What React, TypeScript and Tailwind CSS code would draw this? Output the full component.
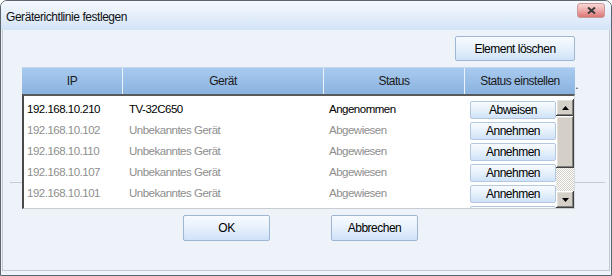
import React from 'react';

type Row = { ip: string; device: string; status: string; action: string; active?: boolean };

const rows: Row[] = [
  { ip: '192.168.10.210', device: 'TV-32C650', status: 'Angenommen', action: 'Abweisen', active: true },
  { ip: '192.168.10.102', device: 'Unbekanntes Gerät', status: 'Abgewiesen', action: 'Annehmen' },
  { ip: '192.168.10.110', device: 'Unbekanntes Gerät', status: 'Abgewiesen', action: 'Annehmen' },
  { ip: '192.168.10.107', device: 'Unbekanntes Gerät', status: 'Abgewiesen', action: 'Annehmen' },
  { ip: '192.168.10.101', device: 'Unbekanntes Gerät', status: 'Abgewiesen', action: 'Annehmen' },
];

const btn =
  'flex items-center justify-center text-black border border-[#9fb6d2] rounded-[2px] bg-linear-to-b from-[#f8fbff] via-[#e6f0fb] to-[#cfe2f8]';

const classic =
  'bg-[#d4d0c8] shadow-[inset_-1px_-1px_#404040,inset_1px_1px_#ffffff,inset_-2px_-2px_#808080,inset_2px_2px_#e4e1dc]';

function Arrow({ up }: { up?: boolean }) {
  return (
    <svg width="7" height="4" viewBox="0 0 7 4">
      <polygon points={up ? '3.5,0 7,4 0,4' : '0,0 7,0 3.5,4'} fill="#000" />
    </svg>
  );
}

export default function App() {
  return (
    <div className="w-[612px] h-[276px] flex flex-col border border-[#5d666f] rounded-t-[7px] bg-[#eef3fa] overflow-hidden text-[11.5px] tracking-[-0.5px] leading-none font-['Liberation_Sans',Arial,sans-serif]">
      {/* title bar */}
      <div className="h-[29px] flex justify-between bg-linear-to-b from-[#f6f9fe] to-[#d3e4f7]">
        <span className="pl-[5px] pt-[10px] text-[12px] tracking-[-0.45px] text-[#111]">Geräterichtlinie festlegen</span>
        <div className="mt-[2px] mr-[6px] w-[28px] h-[15px] flex items-center justify-center rounded-[3px] border border-[#c99a9a] bg-linear-to-b from-[#f7d6d6] via-[#eeaaaa] to-[#dc7575]">
          <svg width="9" height="7" viewBox="0 0 9 7">
            <path d="M1 0.5 L8 6.5 M8 0.5 L1 6.5" stroke="#3a3a3a" strokeWidth="2" />
          </svg>
        </div>
      </div>

      {/* body */}
      <div className="relative flex-1 mx-[1px] mb-[4px] border-x border-b border-[#c2c9d2] pt-[6px] pl-[19px] pr-[34px] flex flex-col">
        <div className="absolute left-[7px] right-[4px] top-[152px] h-px bg-[#c6ccd4]" />

        <div className="flex justify-end">
          <button className={`${btn} w-[120px] h-[25px] text-[12px]`}>Element löschen</button>
        </div>

        {/* header */}
        <div className="relative mt-[6px] h-[27px] flex text-[12px] text-[#1a1a1a] bg-linear-to-b from-[#a9caee] to-[#8ab3e0] border-t border-[#c3d9f1]">
          <div className="w-[101px] flex items-center justify-center border-r border-[#eaf2fb]">IP</div>
          <div className="w-[201px] flex items-center justify-center border-r border-[#eaf2fb]">Gerät</div>
          <div className="w-[141px] flex items-center justify-center border-r border-[#eaf2fb]">Status</div>
          <div className="flex-1 flex items-center justify-center">Status einstellen</div>
          <span className="absolute right-[-3px] top-[11px] text-[#333]">.</span>
        </div>

        {/* list */}
        <div className="relative z-10 h-[115px] bg-white border-t-2 border-l-2 border-t-[#5a5a5a] border-l-[#4a4a4a] border-r border-b border-r-[#d6dade] border-b-[#c9cdd2] pt-[3px] flex">
          <div className="w-[532px] overflow-hidden">
            {rows.map((r) => (
              <div key={r.ip} className={`h-[21px] flex items-center ${r.active ? 'text-black' : 'text-[#8e8e8e]'}`}>
                <div className="w-[99px] pl-[3px]">{r.ip}</div>
                <div className="w-[200px] pl-[6px]">{r.device}</div>
                <div className="w-[141px] pl-[6px]">{r.status}</div>
                <div className="pl-[6px]">
                  <button className={`${btn} w-[86px] h-[18px] border-[#b4c8df] text-[12px]`}>{r.action}</button>
                </div>
              </div>
            ))}
            <div className="h-[21px] flex items-start pt-[2px] pl-[446px]">
              <div className={`${btn} w-[86px] h-[18px] border-[#b4c8df]`} />
            </div>
          </div>
          {/* scrollbar */}
          <div className="w-[18px] flex flex-col bg-[repeating-conic-gradient(#d4d0c8_0_25%,#ffffff_0_50%)] bg-size-[2px_2px]">
            <div className={`${classic} h-[17px] flex items-center justify-center`}>
              <Arrow up />
            </div>
            <div className={`${classic} h-[52px]`} />
            <div className="flex-1" />
            <div className={`${classic} h-[17px] flex items-center justify-center`}>
              <Arrow />
            </div>
          </div>
        </div>

        {/* footer buttons */}
        <div className="mt-[6px] flex text-[12px]">
          <button className={`${btn} ml-[161px] w-[87px] h-[26px]`}>OK</button>
          <button className={`${btn} ml-[61px] w-[87px] h-[26px]`}>Abbrechen</button>
        </div>
      </div>
    </div>
  );
}
